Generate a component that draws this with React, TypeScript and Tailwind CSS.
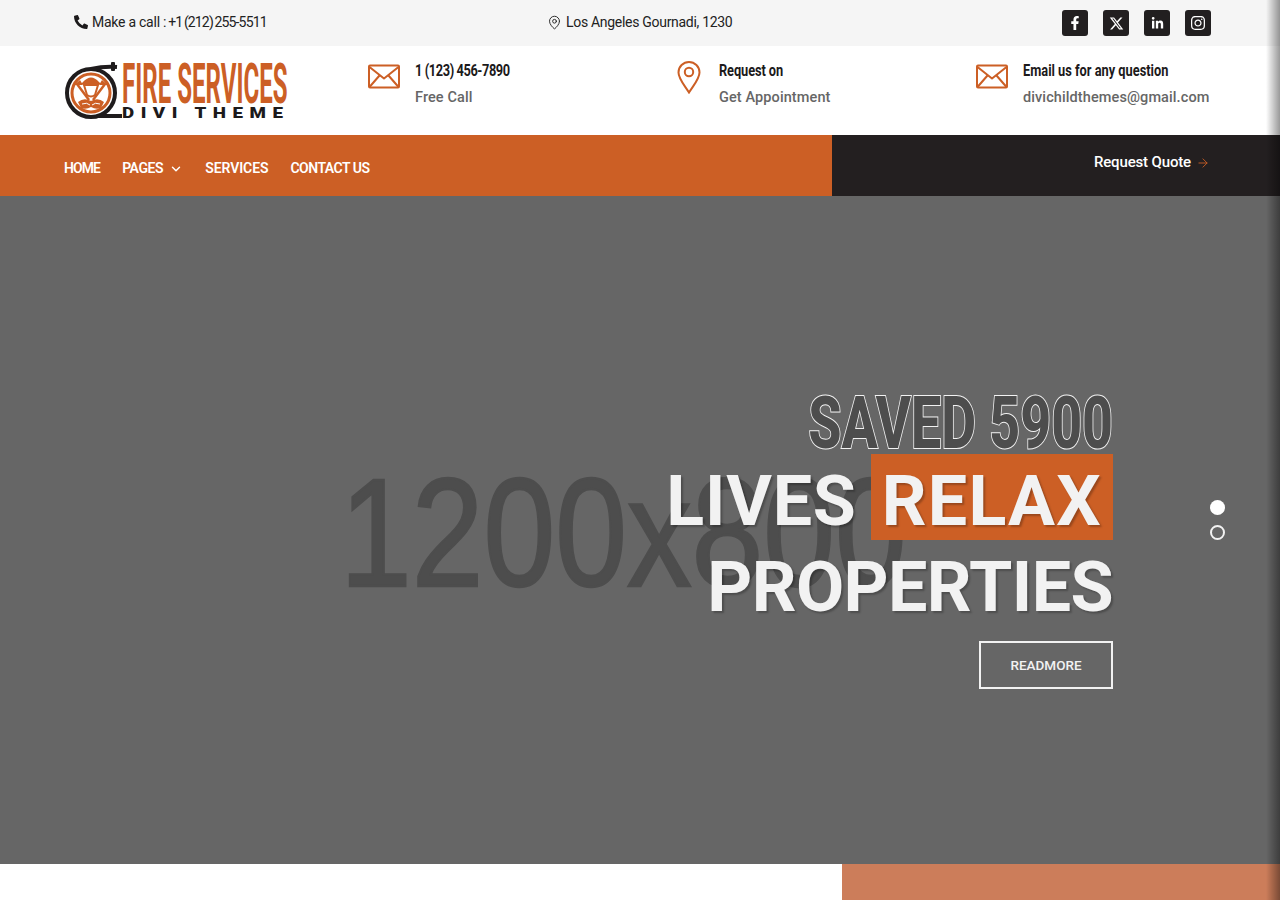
import { ArrowRight, ChevronDown, MapPin } from 'lucide-react';
import { FaFacebookF, FaInstagram, FaLinkedinIn, FaPhoneAlt } from 'react-icons/fa';
import { FaXTwitter } from 'react-icons/fa6';

function MailIcon() {
  return (
    <svg width="32" height="26" viewBox="0 0 32 26" fill="none" stroke="#cc5f25" strokeWidth="2" strokeLinejoin="round">
      <rect x="1" y="1.5" width="30" height="22" rx="1" />
      <path d="M1.5 3 L16 14.5 L30.5 3" />
      <path d="M1.5 23 L11.5 11.5 M30.5 23 L20.5 11.5" />
    </svg>
  );
}

function PinIcon() {
  return (
    <svg width="24" height="33" viewBox="0 0 24 33" fill="none" stroke="#cc5f25" strokeWidth="2">
      <path d="M12 31.5 C8 25 1.5 18 1.5 11.5 A10.5 10.5 0 0 1 22.5 11.5 C22.5 18 16 25 12 31.5 Z" />
      <circle cx="12" cy="11" r="4.2" />
    </svg>
  );
}

function LogoMark() {
  return (
    <svg width="60" height="60" viewBox="0 0 60 60" className="shrink-0">
      <circle cx="27" cy="31" r="24" fill="none" stroke="#1f1c1d" strokeWidth="4" />
      <path d="M27 7 Q40 4 53 5" fill="none" stroke="#1f1c1d" strokeWidth="4" />
      <rect x="47" y="0" width="4" height="9" rx="1" fill="#1f1c1d" />
      <path d="M33 56 L40 52 H58 V56 Z" fill="#1f1c1d" />
      <circle cx="27" cy="31" r="19" fill="#ffffff" stroke="#cc5f25" strokeWidth="3" />
      <path d="M13 22 L25 38 M41 22 L29 38" stroke="#cc5f25" strokeWidth="2.5" />
      <path d="M10 23 L16 18 L19 23 Z M44 23 L38 18 L35 23 Z" fill="#cc5f25" />
      <path d="M19 20 Q27 11 35 20 L37 22 H17 Z" fill="#cc5f25" />
      <path d="M20 23 H34 L31 33 Q27 36 23 33 Z" fill="#ffffff" stroke="#cc5f25" strokeWidth="2" />
      <path d="M14 40 Q20 35 27 39 Q34 35 40 40 L37 46 Q32 48 27 45 Q22 48 17 46 Z" fill="#cc5f25" />
      <path d="M18 42 Q23 40 26 43 M36 42 Q31 40 28 43" fill="none" stroke="#ffffff" strokeWidth="1" />
    </svg>
  );
}

function ContactBlock({
  icon,
  title,
  sub,
  width,
  gap,
  top,
  titleTrack,
}: {
  icon: React.ReactNode;
  title: string;
  sub: string;
  width: string;
  gap: string;
  top: string;
  titleTrack: string;
}) {
  return (
    <div className={`flex ${width}`}>
      <div className={`${gap} ${top} shrink-0`}>{icon}</div>
      <div>
        <div className={`origin-left scale-x-[0.8] whitespace-nowrap text-[16px] font-bold leading-[26px] text-[#1c1a1b] ${titleTrack}`}>
          {title}
        </div>
        <div className="mt-[1px] whitespace-nowrap text-[14.5px] font-medium leading-[26px] tracking-[0.1px] text-[#666666]">{sub}</div>
      </div>
    </div>
  );
}

const socials = [
  { Icon: FaFacebookF, size: 'h-[14px] w-[14px]' },
  { Icon: FaXTwitter, size: 'h-[15px] w-[15px]' },
  { Icon: FaLinkedinIn, size: 'h-[13px] w-[13px]' },
  { Icon: FaInstagram, size: 'h-[16px] w-[16px]' },
];

export default function App() {
  return (
    <div className="relative h-[900px] w-[1280px] overflow-hidden bg-white font-['Roboto',sans-serif]">
      {/* top bar */}
      <div className="flex h-[46px] items-center bg-[#f5f5f5] pl-[74px] pr-[69px] text-[14px] text-[#222222]">
        <div className="flex w-[473px] items-center pb-[2px]">
          <FaPhoneAlt className="mr-[4px] h-[14px] w-[14px] text-[#1c1a1b]" />
          <span className="tracking-[-0.25px]">Make a call :</span>
          <span className="ml-[2px] tracking-[-0.85px] [word-spacing:-1px]">+1 (212) 255-5511</span>
        </div>
        <div className="flex items-center pb-[2px]">
          <MapPin className="mr-[4px] h-[15px] w-[15px]" strokeWidth={1.5} />
          <span className="tracking-[-0.3px]">Los Angeles Gournadi, 1230</span>
        </div>
        <div className="ml-auto flex gap-[15px]">
          {socials.map(({ Icon, size }, i) => (
            <div key={i} className="flex h-[26px] w-[26px] items-center justify-center rounded-[3px] bg-[#221f20] text-white">
              <Icon className={size} />
            </div>
          ))}
        </div>
      </div>

      {/* header */}
      <div className="flex h-[89px] items-start bg-white pl-[64px]">
        <div className="flex w-[304px] pt-[16px]">
          <LogoMark />
          <div className="-ml-[2px] flex flex-col">
            <span className="origin-left scale-x-[0.43] whitespace-nowrap text-[56px] font-bold leading-[44px] text-[#cc5f25]">
              FIRE SERVICES
            </span>
            <span className="origin-left scale-x-[1.25] whitespace-nowrap text-[15px] font-black leading-[14px] tracking-[5.2px] text-[#1c1a1b]">
              DIVI THEME
            </span>
          </div>
        </div>
        <ContactBlock icon={<MailIcon />} title="1 (123) 456-7890" sub="Free Call" width="w-[309px] pt-[12px]" gap="mr-[15px]" top="pt-[6px]" titleTrack="tracking-[-0.5px]" />
        <ContactBlock icon={<PinIcon />} title="Request on" sub="Get Appointment" width="w-[299px] pt-[12px]" gap="mr-[18px]" top="pt-[3px]" titleTrack="tracking-[-0.1px]" />
        <ContactBlock icon={<MailIcon />} title="Email us for any question" sub="divichildthemes@gmail.com" width="pt-[12px]" gap="mr-[15px]" top="pt-[6px]" titleTrack="tracking-[0px]" />
      </div>

      {/* nav */}
      <div className="flex h-[61px]">
        <div className="flex w-[832px] items-center gap-[22px] bg-[#cc5f25] pl-[64px] pt-[6px] text-[14px] font-semibold text-white">
          <span className="tracking-[-0.9px]">HOME</span>
          <span className="flex items-center tracking-[-0.4px]">
            PAGES
            <ChevronDown className="ml-[6px] h-[14px] w-[14px]" strokeWidth={2.5} />
          </span>
          <span className="tracking-[-0.1px]">SERVICES</span>
          <span className="tracking-[-0.5px]">CONTACT US</span>
        </div>
        <div className="flex flex-1 items-center justify-end bg-[#231f20] pb-[6px] pr-[70px] text-[15px] font-medium text-white">
          <span className="tracking-[-0.15px]">Request Quote</span>
          <ArrowRight className="ml-[5px] h-[14px] w-[14px] text-[#cc5f25]" strokeWidth={1.5} />
        </div>
      </div>

      {/* hero */}
      <div className="relative flex h-[668px] flex-col items-end bg-[#666666] pr-[167px] pt-[197px]">
        <div className="absolute left-[340px] top-[246px] origin-top scale-y-[1.2] font-['Liberation_Sans',sans-serif] text-[129px] leading-[150px] text-[#4d4d4d] [-webkit-text-stroke:2px_#4d4d4d]">
          1200x800
        </div>
        <div className="relative flex flex-col items-end">
          <div className="origin-right scale-x-[0.745] whitespace-nowrap text-[72px] font-extrabold leading-[61px] text-[#4d4d4d] [paint-order:stroke_fill] [-webkit-text-stroke:2px_#f2f2f2]">
            SAVED 5900
          </div>
          <div className="flex whitespace-nowrap text-[70px] font-bold leading-[78px] text-[#f2f2f2] [text-shadow:2px_2px_2px_rgba(0,0,0,0.25)]">
            <span className="pt-[8px] tracking-[0.8px]">LIVES</span>
            <span className="ml-[14px] bg-[#cc5f25] px-[11px] pt-[8px] tracking-[1.2px]">RELAX</span>
          </div>
          <div className="whitespace-nowrap pt-[8px] text-[70px] font-bold leading-[78px] tracking-[-0.6px] text-[#f2f2f2] [text-shadow:2px_2px_2px_rgba(0,0,0,0.25)]">
            PROPERTIES
          </div>
          <div className="mt-[15px] flex h-[48px] w-[134px] items-center justify-center border-2 border-[#f2f2f2] pt-[1px] text-[13.5px] font-medium text-[#f2f2f2]">
            READMORE
          </div>
        </div>
        <div className="absolute left-[1210px] top-[304px] flex flex-col gap-[10px]">
          <div className="h-[15px] w-[15px] rounded-full bg-white" />
          <div className="h-[15px] w-[15px] rounded-full border-2 border-[#f2f2f2]" />
        </div>
      </div>

      {/* next section */}
      <div className="flex h-[36px]">
        <div className="w-[842px] bg-white" />
        <div className="flex-1 bg-[#cc7d5a]" />
      </div>

      {/* window edge shadow */}
      <div className="pointer-events-none absolute right-0 top-0 h-full w-[14px] bg-gradient-to-r from-transparent to-black/40" />
    </div>
  );
}
